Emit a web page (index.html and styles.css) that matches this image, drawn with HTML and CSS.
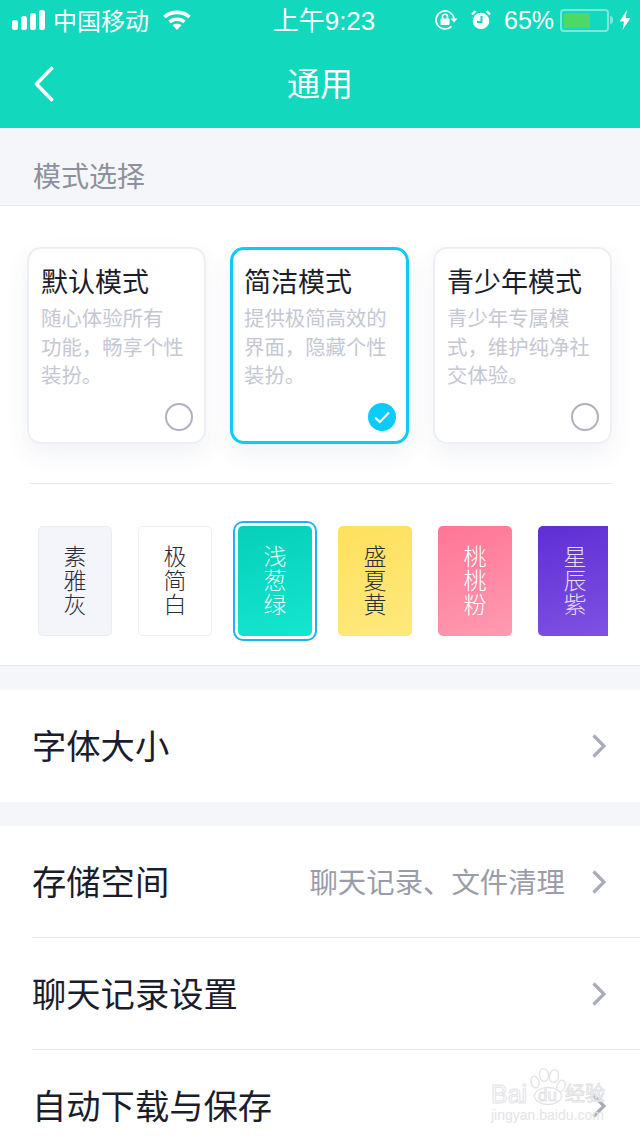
FILE: index.html
```html
<!DOCTYPE html>
<html lang="zh">
<head>
<meta charset="utf-8">
<title>通用</title>
<link rel="stylesheet" href="styles.css">
</head>
<body>
<div class="page">
  <header class="top">
    <div class="status">
      <div class="status-left">
        <svg class="signal" width="33" height="20" viewBox="0 0 33 20"><rect x="0" y="10" width="6" height="10" rx="2.5"/><rect x="9" y="6" width="6" height="14" rx="2.5"/><rect x="18" y="3" width="6" height="17" rx="2.5"/><rect x="27" y="0" width="6" height="20" rx="2.5"/></svg>
        <span class="carrier">中国移动</span>
        <svg class="wifi" width="28" height="20" viewBox="0 0 28 20"><path d="M1.500 7C8.500 0.800 19.500 0.800 26.500 7" fill="none" stroke="#fff" stroke-width="3.600"/><path d="M6.500 11.800C10.500 8.300 17.500 8.300 21.500 11.800" fill="none" stroke="#fff" stroke-width="3.600"/><path d="M9.500 15L14 20L18.500 15C15.500 13.200 12.500 13.200 9.500 15Z" fill="#fff"/></svg>
      </div>
      <span class="clock">上午9:23</span>
      <div class="status-right">
        <svg class="rotate" width="23" height="20" viewBox="0 0 23 20"><path d="M16.500 16.300A9 9 0 1 1 19 9" fill="none" stroke="#fff" stroke-width="1.700"/><path d="M15.500 8.500h7l-3.500 4z" fill="#fff"/><rect x="5.500" y="8.500" width="9" height="6.500" rx="1" fill="#fff"/><path d="M7.500 9V6.800a2.500 2.500 0 0 1 5 0V9" fill="none" stroke="#fff" stroke-width="1.600"/></svg>
        <svg class="alarm" width="20" height="20" viewBox="0 0 20 20"><circle cx="10" cy="11" r="8.300" fill="#fff"/><path d="M10.500 6v6H6" fill="none" stroke="#12d8bd" stroke-width="2"/><path d="M1 4.500L4.500 1M19 4.500L15.500 1" stroke="#fff" stroke-width="2.400"/></svg>
        <span class="percent">65%</span>
        <div class="battery"><div class="battery-fill"></div></div>
        <span class="battery-tip"></span>
        <svg class="bolt" width="12" height="20" viewBox="0 0 12 20"><path d="M8 0L0.500 11.500h4.500L3.500 20L11.500 8H6.500Z" fill="#fff"/></svg>
      </div>
    </div>
    <nav class="nav">
      <svg class="back" width="22" height="36" viewBox="0 0 22 36"><path d="M18.500 2.500L3.500 18L18.500 33.500" fill="none" stroke="#fff" stroke-width="3.600" stroke-linecap="round" stroke-linejoin="round"/></svg>
      <h1 class="title">通用</h1>
    </nav>
  </header>

  <div class="section-head">模式选择</div>

  <section class="mode-panel">
    <div class="cards">
      <article class="card">
        <h2 class="card-title">默认模式</h2>
        <p class="card-text">随心体验所有<br>功能，畅享个性<br>装扮。</p>
        <span class="radio"></span>
      </article>
      <article class="card selected">
        <h2 class="card-title">简洁模式</h2>
        <p class="card-text">提供极简高效的<br>界面，隐藏个性<br>装扮。</p>
        <span class="radio on"><svg width="18" height="14" viewBox="0 0 18 14"><path d="M2 7.500L6.800 12L16 2.500" fill="none" stroke="#fff" stroke-width="2.200"/></svg></span>
      </article>
      <article class="card">
        <h2 class="card-title">青少年模式</h2>
        <p class="card-text">青少年专属模<br>式，维护纯净社<br>交体验。</p>
        <span class="radio"></span>
      </article>
    </div>
    <div class="divider"></div>
    <div class="themes">
      <div class="theme gray">素雅灰</div>
      <div class="theme white">极简白</div>
      <div class="theme green">浅葱绿</div>
      <div class="theme yellow">盛夏黄</div>
      <div class="theme pink">桃桃粉</div>
      <div class="theme purple">星辰紫</div>
    </div>
  </section>

  <section class="group">
    <div class="row">
      <span class="row-label">字体大小</span>
      <svg class="chev" width="16" height="26" viewBox="0 0 16 26"><path d="M2.500 2.500L13 13L2.500 23.500" fill="none" stroke="#a9acb8" stroke-width="3.200"/></svg>
    </div>
  </section>

  <section class="group">
    <div class="row">
      <span class="row-label">存储空间</span>
      <span class="row-value">聊天记录、文件清理</span>
      <svg class="chev" width="16" height="26" viewBox="0 0 16 26"><path d="M2.500 2.500L13 13L2.500 23.500" fill="none" stroke="#a9acb8" stroke-width="3.200"/></svg>
    </div>
    <div class="row">
      <span class="row-label">聊天记录设置</span>
      <svg class="chev" width="16" height="26" viewBox="0 0 16 26"><path d="M2.500 2.500L13 13L2.500 23.500" fill="none" stroke="#a9acb8" stroke-width="3.200"/></svg>
    </div>
    <div class="row">
      <span class="row-label">自动下载与保存</span>
      <svg class="chev" width="16" height="26" viewBox="0 0 16 26"><path d="M2.500 2.500L13 13L2.500 23.500" fill="none" stroke="#a9acb8" stroke-width="3.200"/></svg>
    </div>
  </section>

  <div class="watermark">
    <svg class="paw" width="120" height="44" viewBox="0 0 120 44"><g fill="rgba(255,255,255,0.5)" stroke="#e3e3e6" stroke-width="1.300"><ellipse cx="44" cy="15" rx="4" ry="6" transform="rotate(-15 44 15)"/><ellipse cx="53" cy="8" rx="4.500" ry="6.500" transform="rotate(-8 53 8)"/><ellipse cx="63" cy="9" rx="4.500" ry="6.500" transform="rotate(10 63 9)"/><ellipse cx="70" cy="19" rx="4" ry="6" transform="rotate(20 70 19)"/><ellipse cx="57" cy="29" rx="13.500" ry="8.500"/></g></svg>
    <span class="wm-bai">Bai</span>
    <span class="wm-du">du</span>
    <span class="wm-jy">经验</span>
    <span class="wm-sub">jingyan.baidu.com</span>
  </div>
</div>
</body>
</html>
```
FILE: styles.css
```css
* { box-sizing: border-box; }
html, body { margin: 0; padding: 0; }
body {
  width: 640px;
  height: 1136px;
  overflow: hidden;
  background: #f5f6fa;
  font-family: "Noto Sans CJK SC", "Liberation Sans", sans-serif;
}
.page { position: relative; width: 640px; height: 1136px; overflow: hidden; }

.top { height: 128px; background: #12d8bd; color: #fff; }
.status {
  height: 40px;
  display: flex;
  align-items: center;
  justify-content: space-between;
  padding: 0 9px 0 12px;
  position: relative;
}
.status-left { display: flex; align-items: center; }
.signal { fill: #fff; margin-right: 8px; }
.carrier { font-size: 24px; line-height: 40px; width: 96px; white-space: nowrap; margin-top: -1px; }
.wifi { margin-left: 14px; }
.clock {
  position: absolute;
  left: 0;
  right: 0;
  top: 1px;
  text-align: center;
  font-size: 26px;
  line-height: 40px;
  padding-left: 8px;
  font-family: "Liberation Sans", "Noto Sans CJK SC", sans-serif;
}
.status-right { display: flex; align-items: center; position: relative; z-index: 1; }
.alarm { margin-left: 13px; }
.percent {
  font-size: 25px;
  width: 50px;
  margin-left: 13px;
  font-family: "Liberation Sans", sans-serif;
  line-height: 40px;
}
.battery {
  width: 49px;
  height: 23px;
  margin-left: 6px;
  border: 2px solid #7ce8d8;
  border-radius: 4px;
  padding: 2px;
}
.battery-fill { width: 26px; height: 15px; background: #4cd964; }
.battery-tip { width: 3px; height: 8px; background: #7ce8d8; border-radius: 0 3px 3px 0; margin: 0 6px 0 1px; }

.nav { height: 88px; position: relative; display: flex; align-items: center; justify-content: center; }
.back { position: absolute; left: 33px; top: 26px; }
.title { margin: -4px 0 0; font-size: 33px; font-weight: 400; line-height: 88px; }

.section-head {
  height: 78px;
  padding: 27px 0 0 33px;
  font-size: 28px;
  line-height: 40px;
  color: #8d909d;
  border-bottom: 1px solid #e8e9ef;
}

.mode-panel {
  height: 460px;
  background: #fff;
  border-bottom: 1px solid #e8e9ef;
  padding-top: 41px;
  overflow: hidden;
}
.cards { display: flex; gap: 24px; padding-left: 27px; }
.card {
  position: relative;
  width: 179px;
  height: 197px;
  border: 2px solid #eeeff5;
  border-radius: 14px;
  background: #fff;
  box-shadow: 0 10px 24px rgba(60, 70, 110, 0.07);
  padding: 13px 12px;
}
.card.selected { border: 3px solid #0acbfa; padding: 12px 11px; }
.card-title {
  margin: 0;
  font-size: 27px;
  font-weight: 400;
  line-height: 38px;
  color: #1b1d2b;
  white-space: nowrap;
}
.card-text {
  margin: 3px 0 0;
  font-size: 20.400px;
  line-height: 28.500px;
  color: #c5c7d2;
  white-space: nowrap;
}
.radio {
  position: absolute;
  right: 11px;
  bottom: 11px;
  width: 28px;
  height: 28px;
  border: 2px solid #afb1bf;
  border-radius: 50%;
  display: flex;
  align-items: center;
  justify-content: center;
}
.card.selected .radio { right: 10px; bottom: 10px; }
.radio.on { background: #0acbfa; border-color: #0acbfa; }

.divider { height: 1px; margin: 39px 28px 0 30px; background: #e8e9ef; }
.themes {
  display: flex;
  gap: 26px;
  margin: 42px 32px 0 38px;
  width: 570px;
  clip-path: inset(-10px 0 -10px -10px);
}
.theme {
  flex: 0 0 74px;
  height: 110px;
  border-radius: 5px;
  display: flex;
  align-items: center;
  justify-content: center;
  writing-mode: vertical-rl;
  text-orientation: upright;
  font-weight: 300;
  font-size: 23px;
  letter-spacing: 1px;
  color: #2a2c3a;
}
.gray { background: #f4f5fa; border: 1px solid #ebecf1; }
.white { background: #fff; border: 1px solid #eeeff3; }
.green {
  background: linear-gradient(165deg, #06cfb9, #14e6cf);
  color: #e9fffb;
  box-shadow: 0 0 0 3px #fff, 0 0 0 5px #1cb2f5;
}
.yellow { background: linear-gradient(165deg, #ffe05e, #ffe97c); }
.pink { background: linear-gradient(160deg, #ff7595, #ff9bb2); color: #fff; }
.purple { background: linear-gradient(165deg, #5f2ed4, #7f52e2); color: #e8defc; }

.group { background: #fff; margin-top: 24px; }
.row {
  height: 112px;
  margin-left: 32px;
  padding-right: 33px;
  display: flex;
  align-items: center;
  border-bottom: 1px solid #e8e9ef;
}
.group .row:last-child { border-bottom: 0; }
.row-label { font-size: 34.300px; line-height: 48px; margin-top: -4px; color: #1b1d2b; flex: 1; white-space: nowrap; }
.row-value { font-size: 28.400px; margin-top: -2px; color: #9a9da9; margin-right: 26px; white-space: nowrap; }

.watermark {
  position: absolute;
  left: 491px;
  top: 1067px;
  width: 120px;
  height: 66px;
  color: rgba(255, 255, 255, 0.6);
  -webkit-text-stroke: 1px #e2e2e5;
  font-family: "Liberation Sans", "Noto Sans CJK SC", sans-serif;
  white-space: nowrap;
}
.paw { position: absolute; left: 0; top: 0; }
.wm-bai { position: absolute; left: 0; top: 12px; font-size: 25px; line-height: 30px; }
.wm-du { position: absolute; left: 47px; top: 18px; font-size: 17px; line-height: 22px; }
.wm-jy { position: absolute; left: 74px; top: 12px; font-size: 20px; line-height: 28px; font-family: "Noto Sans CJK SC", sans-serif; }
.wm-sub { position: absolute; left: 0; top: 40px; font-size: 14px; line-height: 16px; -webkit-text-stroke: 0; color: #e4e4e6; }
```
